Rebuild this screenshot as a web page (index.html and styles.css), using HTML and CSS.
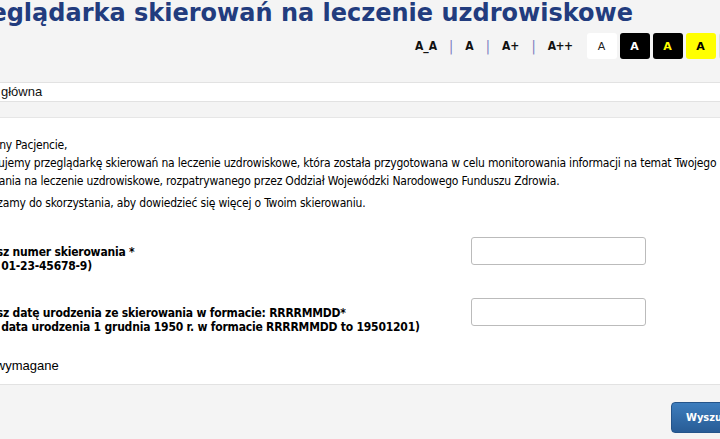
FILE: index.html
```html
<!DOCTYPE html>
<html lang="pl">
<head>
<meta charset="utf-8">
<title>Przeglądarka skierowań na leczenie uzdrowiskowe</title>
<link rel="stylesheet" href="styles.css">
</head>
<body>
<div class="page">
  <header class="header">
    <h1 class="title">Przeglądarka skierowań na leczenie uzdrowiskowe</h1>
    <div class="tools">
      <div class="sizes">
        <a class="size">A_A</a><span class="sep">|</span>
        <a class="size">A</a><span class="sep">|</span>
        <a class="size">A+</a><span class="sep">|</span>
        <a class="size">A++</a>
      </div>
      <div class="contrast">
        <span class="cbox c-white">A</span>
        <span class="cbox c-black">A</span>
        <span class="cbox c-blackyellow">A</span>
        <span class="cbox c-yellow">A</span>
        <span class="cbox c-gray">A</span>
      </div>
    </div>
  </header>
  <nav class="crumbs">Strona główna</nav>
  <div class="strip"></div>
  <main class="main">
    <p class="intro first">Szanowny Pacjencie,</p>
    <p class="intro">Prezentujemy przeglądarkę skierowań na leczenie uzdrowiskowe, która została przygotowana w celu monitorowania informacji na temat Twojego skierowania na leczenie uzdrowiskowe, rozpatrywanego przez Oddział Wojewódzki Narodowego Funduszu Zdrowia.</p>
    <p class="intro third">Zapraszamy do skorzystania, aby dowiedzieć się więcej o Twoim skierowaniu.</p>
    <form class="form">
      <div class="row">
        <label class="label">Wpisz numer skierowania *<br>(np. 01-23-45678-9)</label>
        <input class="input" type="text">
      </div>
      <div class="row">
        <label class="label">Wpisz datę urodzenia ze skierowania w formacie: RRRRMMDD*<br>(np. data urodzenia 1 grudnia 1950 r. w formacie RRRRMMDD to 19501201)</label>
        <input class="input" type="text">
      </div>
      <p class="req">* pola wymagane</p>
    </form>
  </main>
  <footer class="footer">
    <button class="btn" type="button">Wyszukaj</button>
  </footer>
</div>
</body>
</html>
```
FILE: styles.css
```css
html, body { margin: 0; padding: 0; }
body {
  background: #f4f4f4;
  overflow: hidden;
  width: 720px;
  height: 439px;
  font-family: "DejaVu Sans", Verdana, sans-serif;
  color: #000;
}
.page {
  margin-left: -41px;
  width: 860px;
}
.header {
  background: #f4f4f4;
  height: 82px;
  display: flex;
  flex-direction: column;
}
.title {
  margin: 0 0 0 -12px;
  font-size: 24px;
  font-weight: bold;
  color: #223c7e;
  line-height: 26px;
  white-space: nowrap;
}
.tools {
  display: flex;
  align-items: center;
  margin-left: 456px;
  margin-top: 7px;
}
.sizes {
  display: flex;
  align-items: center;
  gap: 12px;
  font-family: "DejaVu Sans Condensed", "DejaVu Sans", sans-serif;
  font-stretch: condensed;
  font-size: 12px;
  font-weight: bold;
  color: #111;
}
.size:nth-of-type(4) { letter-spacing: -0.5px; }
.sep { color: #7a7ac0; font-weight: normal; font-size: 14px; }
.contrast { display: flex; gap: 3px; margin-left: 14px; }
.cbox {
  width: 30px; height: 26px;
  display: flex; align-items: center; justify-content: center;
  border-radius: 3px;
  font-size: 11px; font-weight: bold;
}
.c-white { background: #fff; color: #222; font-weight: normal; }
.c-black { background: #000; color: #fff; }
.c-blackyellow { background: #000; color: #ff0; }
.c-yellow { background: #ff0; color: #000; }
.c-gray { background: #ddd; color: #000; }
.crumbs {
  background: #fff;
  border-top: 1px solid #e2e2e2;
  border-bottom: 1px solid #e2e2e2;
  height: 18px;
  line-height: 18px;
  font-family: "Liberation Sans", Arial, sans-serif;
  font-size: 13px;
  color: #111;
}
.strip { height: 15px; background: #f4f4f4; border-bottom: 1px solid #e6e6e6; }
.main {
  box-sizing: border-box;
  background: #fff;
  padding-top: 18px;
  height: 267px;
  border-bottom: 1px solid #e2e2e2;
  font-family: "DejaVu Sans Condensed", "DejaVu Sans", sans-serif;
  font-stretch: condensed;
}
.intro {
  margin: 0 0 4px 0;
  width: 780px;
  font-size: 12px;
  line-height: 18px;
  letter-spacing: -0.2px;
}
.intro.first { margin-bottom: 0; }
.intro.third { margin-left: 2px; }
.form { margin-top: 25px; }
.row { display: flex; align-items: flex-start; height: 61px; }
.label {
  flex: 0 0 497px;
  margin: 8px 0 0 15px;
  font-weight: bold;
  font-size: 12px;
  line-height: 14px;
  letter-spacing: -0.2px;
  white-space: nowrap;
}
.input {
  width: 175px; height: 28px;
  box-sizing: border-box;
  border: 1px solid #bbb;
  border-radius: 3px;
  margin: 0;
}
.req {
  font-family: "Liberation Sans", Arial, sans-serif;
  font-size: 13px;
  line-height: 15px;
  margin: -1px 0 0 0;
}
.footer {
  background: #f4f4f4;
  display: flex;
  padding: 17px 0 0 712px;
}
.btn {
  background: linear-gradient(#3d7dbd, #285c96);
  border: 1px solid #24548a;
  border-radius: 4px;
  color: #fff;
  font-family: "DejaVu Sans Condensed", "DejaVu Sans", sans-serif;
  font-stretch: condensed;
  font-weight: bold;
  font-size: 11px;
  height: 31px;
  padding: 0 14px;
}
```
